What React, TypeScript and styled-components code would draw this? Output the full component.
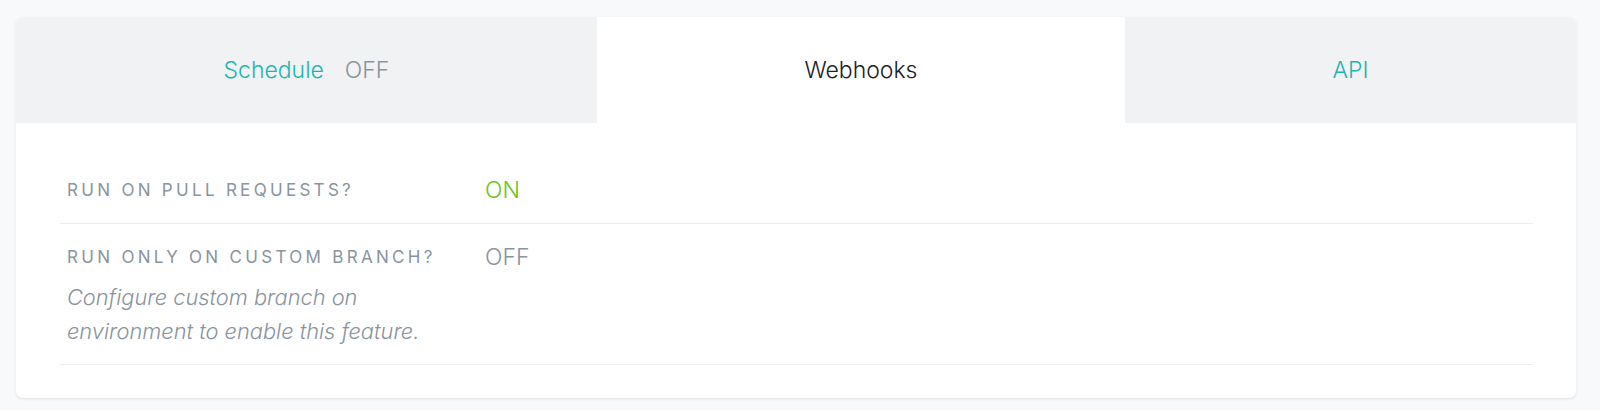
import React, { useState } from 'react';
import styled, { createGlobalStyle } from 'styled-components';

const colors = {
  page: '#f8f9fb',
  tabOff: '#f0f2f4',
  teal: '#1db5b2',
  gray: '#89949d',
  green: '#6cc418',
  dark: '#1b2127',
  line: '#ebedef',
};

const GlobalStyle = createGlobalStyle`
  html, body {
    margin: 0;
    padding: 0;
    background: ${colors.page};
    font-family: Inter, "Noto Sans", sans-serif;
  }
`;

type TabKey = 'schedule' | 'webhooks' | 'api';

const App = () => {
  const [tab, setTab] = useState<TabKey>('webhooks');
  return (
    <>
      <GlobalStyle />
      <Page>
        <Card>
          <Tabs>
            <Tab active={tab === 'schedule'} onClick={() => setTab('schedule')}>
              <span className="name">Schedule</span>
              <span className="status">OFF</span>
            </Tab>
            <Tab active={tab === 'webhooks'} onClick={() => setTab('webhooks')}>
              <span className="name">Webhooks</span>
            </Tab>
            <Tab active={tab === 'api'} onClick={() => setTab('api')}>
              <span className="name">API</span>
            </Tab>
          </Tabs>
          <Body>
            <Row>
              <LabelCell>
                <Label>Run on pull requests?</Label>
              </LabelCell>
              <Value on>ON</Value>
            </Row>
            <Row>
              <LabelCell>
                <Label>Run only on custom branch?</Label>
                <Hint>Configure custom branch on environment to enable this feature.</Hint>
              </LabelCell>
              <Value>OFF</Value>
            </Row>
          </Body>
        </Card>
      </Page>
    </>
  );
};

const Page = styled.div`
  padding: 17px 24px 13px 16px;
`;

const Card = styled.div`
  background: #fff;
  border-radius: 7px;
  overflow: hidden;
  box-shadow: 0 1px 3px rgba(20, 30, 40, 0.1);
`;

const Tabs = styled.div`
  display: flex;
  height: 106px;
`;

const Tab = styled.div<{ active?: boolean }>`
  flex: 1 1 auto;
  display: flex;
  align-items: center;
  justify-content: center;
  gap: 21px;
  font-size: 23px;
  font-weight: 300;
  cursor: pointer;
  background: ${(p) => (p.active ? '#fff' : colors.tabOff)};
  .name {
    color: ${(p) => (p.active ? colors.dark : colors.teal)};
  }
  .status {
    color: ${colors.gray};
  }
`;

const Body = styled.div`
  padding: 34px 43px 33px 44px;
`;

const Row = styled.div`
  display: flex;
  align-items: flex-start;
  padding: 16px 7px;
  border-bottom: 1px solid ${colors.line};
`;

const LabelCell = styled.div`
  width: 380px;
  flex: none;
  margin-right: 38px;
`;

const Label = styled.div`
  font-size: 17px;
  line-height: 34px;
  letter-spacing: 3.3px;
  text-transform: uppercase;
  color: ${colors.gray};
`;

const Hint = styled.div`
  margin-top: 6px;
  font-size: 21.8px;
  font-weight: 300;
  line-height: 34px;
  font-style: italic;
  color: ${colors.gray};
`;

const Value = styled.div<{ on?: boolean }>`
  font-size: 23px;
  font-weight: 300;
  line-height: 34px;
  color: ${(p) => (p.on ? colors.green : colors.gray)};
`;

export default App;
